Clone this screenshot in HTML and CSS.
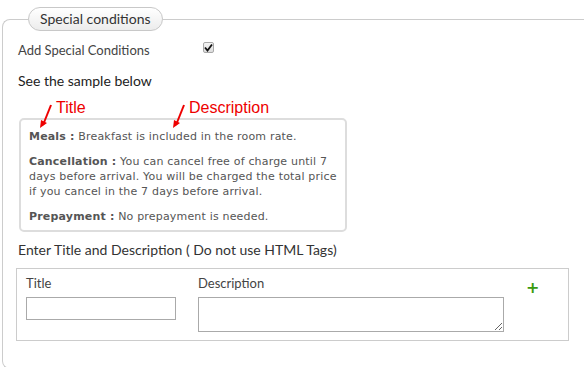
FILE: index.html
```html
<!DOCTYPE html>
<html lang="en">
<head>
    <meta charset="UTF-8">
    <title>Special conditions</title>
    <link rel="stylesheet" href="styles.css">
</head>
<body>
    <!-- Special conditions section -->
    <fieldset class="conditions">
        <legend>Special conditions</legend>

        <div class="check-row">
            <span class="check-label">Add Special Conditions</span>
            <span class="fake-check">
                <svg width="9" height="9" viewBox="0 0 9 9"><path d="M1 4.5 L3.5 7.5 L8 1.5" fill="none" stroke="#111" stroke-width="1.8"/></svg>
            </span>
        </div>

        <p class="sample-title">See the sample below</p>

        <!-- Sample with annotations -->
        <div class="sample-wrap">
            <div class="annotations">
                <span class="note note-title">
                    <svg class="arrow" width="14" height="26" viewBox="0 0 14 26"><path d="M12 1 L4 21" stroke="#e00" stroke-width="2"/><path d="M1 24 L2 16 L8 19 Z" fill="#e00"/></svg>
                    Title
                </span>
                <span class="note note-desc">
                    <svg class="arrow" width="14" height="26" viewBox="0 0 14 26"><path d="M12 1 L4 21" stroke="#e00" stroke-width="2"/><path d="M1 24 L2 16 L8 19 Z" fill="#e00"/></svg>
                    Description
                </span>
            </div>
            <div class="sample">
                <p><b>Meals :</b> Breakfast is included in the room rate.</p>
                <p><b>Cancellation :</b> You can cancel free of charge until 7 days before arrival. You will be charged the total price if you cancel in the 7 days before arrival.</p>
                <p><b>Prepayment :</b> No prepayment is needed.</p>
            </div>
        </div>

        <p class="enter-title">Enter Title and Description ( Do not use HTML Tags)</p>

        <div class="entry">
            <div class="field">
                <label>Title</label>
                <input type="text" class="title-input">
            </div>
            <div class="field">
                <label>Description</label>
                <textarea class="desc-input"></textarea>
            </div>
            <span class="add">+</span>
        </div>
    </fieldset>
</body>
</html>
```

FILE: styles.css
```css
body {
    margin: 0;
    background-color: #fff;
    font-family: Lato, "DejaVu Sans", sans-serif;
    font-size: 13px;
    color: #444;
}

.conditions {
    margin: 7px 0 0 2px;
    width: 582px;
    height: 362px;
    box-sizing: border-box;
    border: 1px solid #ccc;
    border-right: none;
    border-radius: 8px 0 0 8px;
    padding: 0 0 0 15px;
}

.conditions legend {
    margin-left: 10px;
    padding: 0 11px;
    height: 22px;
    line-height: 22px;
    border: 1px solid #c8c8c8;
    border-radius: 12px;
    background: linear-gradient(#fff, #ececec);
    font-size: 14px;
    color: #333;
}

.check-row {
    display: flex;
    align-items: center;
    margin-top: 10px;
    height: 18px;
}

.check-label {
    width: 185px;
}

.fake-check {
    width: 11px;
    height: 11px;
    box-sizing: border-box;
    border: 1px solid #a8a8a8;
    border-radius: 2px;
    background: linear-gradient(#f4f4f4, #dcdcdc);
    display: flex;
    align-items: center;
    justify-content: center;
    margin-top: -6px;
}

.sample-title {
    margin: 13px 0 0;
    font-size: 14px;
    color: #222;
}

.sample-wrap {
    margin-top: 10px;
}

.annotations {
    position: relative;
    height: 19px;
}

.note {
    position: absolute;
    top: 0;
    font-family: "Liberation Sans", Arial, sans-serif;
    font-size: 16px;
    color: #e00;
}

.note .arrow {
    position: absolute;
    left: -17px;
    top: 5px;
}

.note-title {
    left: 38px;
}

.note-desc {
    left: 171px;
}

.sample {
    width: 328px;
    box-sizing: border-box;
    margin-left: 1px;
    border: 2px solid #ddd;
    border-radius: 5px;
    padding: 9px 8px 6px;
    font-family: "DejaVu Sans", Verdana, sans-serif;
    font-size: 11px;
    letter-spacing: 0.18px;
    line-height: 15px;
    color: #555;
}

.sample p {
    margin: 0 0 10px;
}

.sample p:last-child {
    margin-bottom: 0;
}

.enter-title {
    margin: 9px 0 0;
    font-size: 14px;
    color: #333;
}

.entry {
    display: flex;
    align-items: flex-start;
    margin-top: 10px;
    width: 553px;
    height: 73px;
    box-sizing: border-box;
    margin-left: -2px;
    border: 1px solid #ccc;
    padding: 7px 9px;
}

.field {
    display: flex;
    flex-direction: column;
    margin-right: 22px;
}

.field label {
    height: 20px;
    margin-top: -1px;
    margin-bottom: 2px;
}

.title-input {
    width: 150px;
    height: 23px;
    box-sizing: border-box;
    border: 1px solid #aaa;
    margin: 0;
}

.desc-input {
    width: 306px;
    height: 35px;
    box-sizing: border-box;
    border: 1px solid #aaa;
    margin: 0;
    resize: vertical;
}

.add {
    margin-top: 2px;
    font-family: "DejaVu Sans", sans-serif;
    font-weight: bold;
    font-size: 16px;
    color: #3a9a10;
}
```
